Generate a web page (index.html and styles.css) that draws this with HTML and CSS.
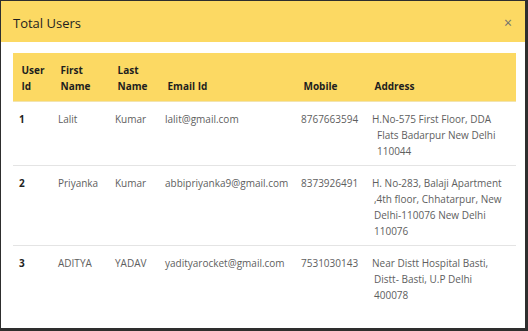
FILE: index.html
```html
<!DOCTYPE html>
<html>
<head>
<meta charset="utf-8">
<link rel="stylesheet" href="styles.css">
</head>
<body>
<div class="modal">
  <div class="modal-header">
    <h5 class="modal-title">Total Users</h5>
    <span class="close">×</span>
  </div>
  <div class="modal-body">
    <table class="users">
      <colgroup>
        <col class="c1"><col class="c2"><col class="c3"><col class="c4"><col class="c5"><col class="c6">
      </colgroup>
      <thead>
        <tr>
          <th>User<br>Id</th>
          <th>First<br>Name</th>
          <th>Last<br>Name</th>
          <th>Email Id</th>
          <th>Mobile</th>
          <th>Address</th>
        </tr>
      </thead>
      <tbody>
        <tr>
          <td class="id">1</td>
          <td>Lalit</td>
          <td>Kumar</td>
          <td>lalit@gmail.com</td>
          <td>8767663594</td>
          <td class="addr">H.No-575 First Floor, DDA<br><span class="ind">Flats Badarpur New Delhi</span><br><span class="ind">110044</span></td>
        </tr>
        <tr>
          <td class="id">2</td>
          <td>Priyanka</td>
          <td>Kumar</td>
          <td>abbipriyanka9@gmail.com</td>
          <td>8373926491</td>
          <td class="addr">H. No-283, Balaji Apartment<br><span class="ind2">,4th floor, Chhatarpur, New</span><br><span class="ind2">Delhi-110076 New Delhi</span><br><span class="ind2">110076</span></td>
        </tr>
        <tr>
          <td class="id">3</td>
          <td>ADITYA</td>
          <td>YADAV</td>
          <td>yadityarocket@gmail.com</td>
          <td>7531030143</td>
          <td class="addr">Near Distt Hospital Basti,<br><span class="ind2">Distt- Basti, U.P Delhi</span><br><span class="ind2">400078</span></td>
        </tr>
      </tbody>
    </table>
  </div>
</div>
</body>
</html>
```

FILE: styles.css
```css
html, body {
  margin: 0;
  padding: 0;
  height: 100%;
}
body {
  background: #2e2e2e;
  font-family: "Open Sans", "Noto Sans", sans-serif;
  font-size: 10px;
  line-height: 16px;
  color: #212529;
  padding: 1px 3px 3px 1px;
  box-sizing: border-box;
}
.modal {
  background: #fff;
  height: 100%;
  box-sizing: border-box;
  display: flex;
  flex-direction: column;
}
.modal-header {
  background: #fcd963;
  display: flex;
  align-items: center;
  justify-content: space-between;
  padding: 3px 12px 0 12px;
  height: 41px;
  box-sizing: border-box;
  flex: none;
}
.modal-title {
  margin: 0;
  font-size: 13px;
  font-weight: 400;
  line-height: 20px;
  color: #1f1f1f;
}
.close {
  font-size: 14px;
  color: #707070;
  line-height: 1;
  margin-right: 1px;
}
.modal-body {
  padding: 11px 9px 0 12px;
}
.users {
  width: 100%;
  border-collapse: collapse;
  table-layout: fixed;
}
.c1 { width: 39px; }
.c2 { width: 57px; }
.c3 { width: 50px; }
.c4 { width: 136px; }
.c5 { width: 71px; }
.c6 { width: auto; }
.users thead th {
  background: #fcd963;
  text-align: left;
  vertical-align: bottom;
  font-weight: 700;
  color: #1e1e1e;
  padding: 9px 4px 7px 8.5px;
  border-bottom: 1px solid #f2e4b0;
}
.users td {
  vertical-align: top;
  padding: 9px 4px 6px 6px;
  color: #5e5e5e;
  border-top: 1px solid #e4e4e4;
}
.users tbody tr:first-child td {
  border-top: none;
}
.users td.id {
  font-weight: 700;
  color: #222;
}
.ind {
  padding-left: 5px;
}
.ind2 {
  padding-left: 2px;
}
```
